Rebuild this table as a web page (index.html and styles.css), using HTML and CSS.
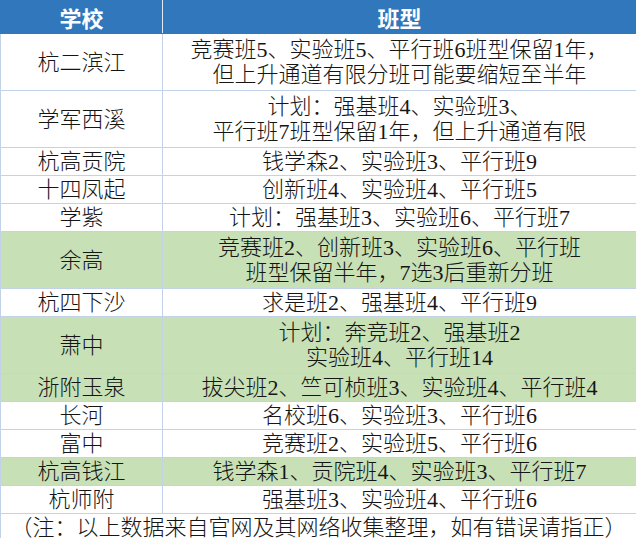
FILE: index.html
```html
<!DOCTYPE html>
<html lang="zh-CN">
<head>
<meta charset="utf-8">
<title>班型</title>
<link rel="stylesheet" href="styles.css">
</head>
<body>
<table class="grid">
  <colgroup><col class="c-school"><col class="c-class"></colgroup>
  <thead>
    <tr class="head"><th>学校</th><th>班型</th></tr>
  </thead>
  <tbody>
    <tr class="two"><td>杭二滨江</td><td>竞赛班5、实验班5、平行班6班型保留1年，<br>但上升通道有限分班可能要缩短至半年</td></tr>
    <tr class="two"><td>学军西溪</td><td>计划：强基班4、实验班3、<br>平行班7班型保留1年，但上升通道有限</td></tr>
    <tr class="one"><td>杭高贡院</td><td>钱学森2、实验班3、平行班9</td></tr>
    <tr class="one"><td>十四凤起</td><td>创新班4、实验班4、平行班5</td></tr>
    <tr class="one"><td>学紫</td><td>计划：强基班3、实验班6、平行班7</td></tr>
    <tr class="two green"><td>余高</td><td>竞赛班2、创新班3、实验班6、平行班<br>班型保留半年，7选3后重新分班</td></tr>
    <tr class="one"><td>杭四下沙</td><td>求是班2、强基班4、平行班9</td></tr>
    <tr class="two green"><td>萧中</td><td>计划：奔竞班2、强基班2<br>实验班4、平行班14</td></tr>
    <tr class="one green"><td>浙附玉泉</td><td>拔尖班2、竺可桢班3、实验班4、平行班4</td></tr>
    <tr class="one"><td>长河</td><td>名校班6、实验班3、平行班6</td></tr>
    <tr class="one"><td>富中</td><td>竞赛班2、实验班5、平行班6</td></tr>
    <tr class="one green"><td>杭高钱江</td><td>钱学森1、贡院班4、实验班3、平行班7</td></tr>
    <tr class="one"><td>杭师附</td><td>强基班3、实验班4、平行班6</td></tr>
    <tr class="one note"><td colspan="2">（注：以上数据来自官网及其网络收集整理，如有错误请指正）</td></tr>
  </tbody>
</table>
</body>
</html>
```

FILE: styles.css
```css
html, body {
  margin: 0;
  padding: 0;
  background: #ffffff;
}

.grid {
  width: 636px;
  table-layout: fixed;
  border-collapse: collapse;
  font-family: "Liberation Serif", "Noto Sans CJK SC", serif;
  font-size: 22px;
  color: #151515;
  border: 1px solid #4f86c4;
}

.c-school { width: 162px; }
.c-class { width: 474px; }

.grid th,
.grid td {
  padding: 0;
  text-align: center;
  vertical-align: middle;
  border: 1px solid #c2d2e8;
  white-space: nowrap;
  font-weight: 300;
}

.head th {
  height: 32px;
  background: #3077bc;
  color: #ffffff;
  font-weight: 700;
  font-family: "Noto Sans CJK SC", sans-serif;
  line-height: 26px;
  border-color: #3077bc;
  border-right-color: #dfe8f4;
}

.one td {
  height: 27px;
  line-height: 26px;
}

.two td {
  height: 56px;
  line-height: 25px;
}

.green td {
  background: #c7e0b5;
}

.note td {
  background: #ffffff;
}
```
